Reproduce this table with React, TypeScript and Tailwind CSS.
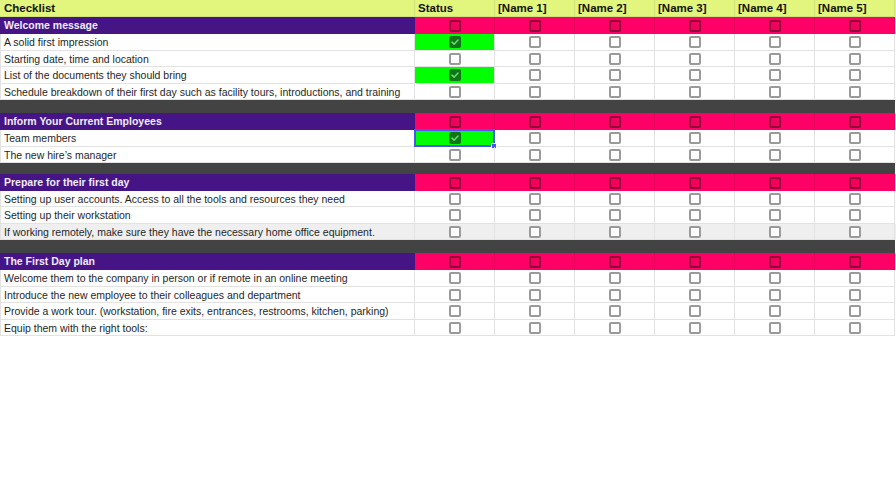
import React from "react";

type Item = { t: string; checked?: boolean; gray?: boolean; selected?: boolean; h: number };
type Section = { title: string; items: Item[]; sepAfter?: number };

const sections: Section[] = [
  {
    title: "Welcome message",
    items: [
      { t: "A solid first impression", checked: true, h: 17 },
      { t: "Starting date, time and location", h: 16 },
      { t: "List of the documents they should bring", checked: true, h: 17 },
      { t: "Schedule breakdown of their first day such as facility tours, introductions, and training", h: 16 },
    ],
    sepAfter: 13,
  },
  {
    title: "Inform Your Current Employees",
    items: [
      { t: "Team members", checked: true, selected: true, h: 17 },
      { t: "The new hire’s manager", h: 16 },
    ],
    sepAfter: 11,
  },
  {
    title: "Prepare for their first day",
    items: [
      { t: "Setting up user accounts. Access to all the tools and resources they need", h: 16 },
      { t: "Setting up their workstation", h: 17 },
      { t: "If working remotely, make sure they have the necessary home office equipment.", gray: true, h: 16 },
    ],
    sepAfter: 13,
  },
  {
    title: "The First Day plan",
    items: [
      { t: "Welcome them to the company in person or if remote in an online meeting", h: 17 },
      { t: "Introduce the new employee to their colleagues and department", h: 16 },
      { t: "Provide a work tour. (workstation, fire exits, entrances, restrooms, kitchen, parking)", h: 17 },
      { t: "Equip them with the right tools:", h: 16 },
    ],
  },
];

const names = ["[Name 1]", "[Name 2]", "[Name 3]", "[Name 4]", "[Name 5]"];

function Box({ kind }: { kind: "plain" | "pink" | "checked" }) {
  if (kind === "checked") {
    return (
      <span className="flex h-[12px] w-[12px] items-center justify-center rounded-[2px] bg-[#10741a]">
        <svg width="10" height="10" viewBox="0 0 10 10">
          <path d="M2 5.2 L4.1 7.2 L8 3" fill="none" stroke="#5fe05f" strokeWidth="1.6" strokeLinecap="round" strokeLinejoin="round" />
        </svg>
      </span>
    );
  }
  if (kind === "pink") {
    return <span className="block h-[12px] w-[12px] rounded-[2px] border-2 border-[#8e0036] bg-[#f2005f]" />;
  }
  return <span className="block h-[12px] w-[12px] rounded-[2px] border-2 border-[#9a9a9a] bg-white" />;
}

export default function App() {
  const font = { fontFamily: '"Liberation Sans", Arial, sans-serif' };
  return (
    <div className="h-[504px] w-[896px] bg-white" style={font}>
      {/* header */}
      <div className="flex h-[17px] bg-[#e2f57c] text-[11.5px] font-bold text-[#111]">
        <div className="flex w-[415px] items-center border-b border-r border-[#d2e27a] pl-[4px] pt-[1px]">Checklist</div>
        <div className="flex w-[80px] items-center border-b border-r border-[#d2e27a] pl-[3px] pt-[1px]">Status</div>
        {names.map((n) => (
          <div key={n} className="flex w-[80px] items-center border-b border-r border-[#d2e27a] pl-[3px] pt-[1px]">
            {n}
          </div>
        ))}
      </div>

      {sections.map((s) => (
        <div key={s.title}>
          {/* section title */}
          <div className="flex h-[17px]">
            <div className="flex w-[415px] items-center bg-[#451585] pl-[4px] pt-[1px] text-[10.5px] font-bold text-[#f1ecf8]">
              {s.title}
            </div>
            {[0, 1, 2, 3, 4, 5].map((i) => (
              <div key={i} className="flex w-[80px] items-center justify-center border-r border-[#e6005a] bg-[#ff0066]">
                <Box kind="pink" />
              </div>
            ))}
          </div>
          {s.items.map((it) => (
            <div key={it.t} className={`flex ${it.h === 17 ? "h-[17px]" : "h-[16px]"} ${it.gray ? "bg-[#efefef]" : "bg-white"}`}>
              <div className="flex w-[415px] items-center border-b border-l border-r border-[#e2e2e2] pl-[3px] pt-[2px] text-[10.5px] text-[#1f1f1f]">
                {it.t}
              </div>
              <div
                className={`relative flex w-[80px] items-center justify-center border-b border-r border-[#e2e2e2] ${
                  it.checked ? "bg-[#00ff00]" : ""
                }`}
              >
                <Box kind={it.checked ? "checked" : "plain"} />
                {it.selected && (
                  <>
                    <span className="pointer-events-none absolute -top-[1px] -left-[1px] -right-[1px] -bottom-[1px] border-2 border-[#4a55f2]" />
                    <span className="absolute -right-[3px] -bottom-[3px] h-[6px] w-[6px] border border-white bg-[#4a55f2]" />
                  </>
                )}
              </div>
              {[0, 1, 2, 3, 4].map((i) => (
                <div key={i} className="flex w-[80px] items-center justify-center border-b border-r border-[#e2e2e2]">
                  <Box kind="plain" />
                </div>
              ))}
            </div>
          ))}
          {s.sepAfter && (
            <div className={`w-[895px] bg-[#434343] ${s.sepAfter === 13 ? "h-[13px]" : "h-[11px]"}`} />
          )}
        </div>
      ))}
    </div>
  );
}
